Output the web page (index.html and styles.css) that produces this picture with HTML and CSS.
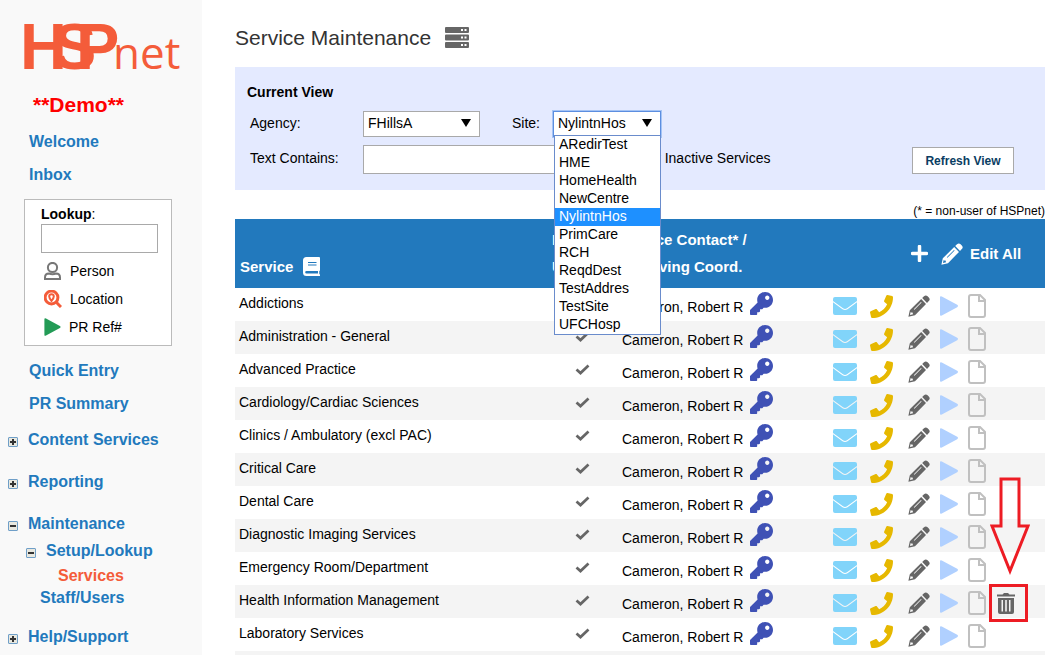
FILE: index.html
```html
<!DOCTYPE html>
<html lang="en">
<head>
    <meta charset="UTF-8">
    <meta name="viewport" content="width=device-width, initial-scale=1.0">
    <title>Service Maintenance</title>
    <link rel="stylesheet" href="styles.css">
</head>
<body>
    <svg class="sprite" aria-hidden="true">
        <symbol id="key" viewBox="0 0 512 512"><path d="M512 176.001C512 273.203 433.202 352 336 352c-11.22 0-22.19-1.062-32.827-3.069l-24.012 27.014A23.999 23.999 0 0 1 261.223 384H224v40c0 13.255-10.745 24-24 24h-40v40c0 13.255-10.745 24-24 24H24c-13.255 0-24-10.745-24-24v-78.059c0-6.365 2.529-12.47 7.029-16.971l161.802-161.802C163.108 213.814 160 195.271 160 176 160 78.798 238.797.001 335.999 0 433.488-.001 512 78.511 512 176.001zM336 128c0 26.51 21.49 48 48 48s48-21.49 48-48-21.49-48-48-48-48 21.49-48 48z"/></symbol>
        <symbol id="phone" viewBox="0 0 512 512"><path d="M493.4 24.6l-104-24c-11.3-2.6-22.9 3.3-27.5 13.9l-48 112c-4.2 9.8-1.4 21.3 6.9 28l60.6 49.6c-36 76.7-98.9 140.5-177.2 177.2l-49.6-60.6c-6.8-8.3-18.2-11.1-28-6.9l-112 48C3.9 366.5-2 378.1.6 389.4l24 104C27.1 504.2 36.7 512 48 512c256.1 0 464-207.5 464-464 0-11.2-7.7-20.9-18.6-23.4z"/></symbol>
        <symbol id="check" viewBox="0 0 15 11"><path d="M1.5 5.5l4 3.6L13.5 1.600" fill="none" stroke="currentColor" stroke-width="2.700"/></symbol>
        <symbol id="mail" viewBox="0 0 24 18"><path d="M2 0h20q2 0 2 2v2L14 11.200q-2 1.400-4 0L0 4V2q0-2 2-2zM0 5.300l9.500 6.900q2.500 1.600 5 0L24 5.300V16q0 2-2 2H2q-2 0-2-2z"/></symbol>
        <symbol id="pencil" viewBox="0 0 22 22"><path fill-rule="evenodd" d="M16 1.300q1.800-1.800 3.600 0l1.200 1.200q1.800 1.800 0 3.600l-1.800 1.800-4.800-4.800zM13.200 4.100l4.800 4.800L7 20.200l-6.600 1.600L1.800 15.300zM2.600 17l-.6 3 3-.7-.4-1.700-1.600-.2zM13 7l-7.200 7.200.6.600 7.200-7.200z"/></symbol>
        <symbol id="play" viewBox="0 0 18 20"><path d="M0 1.500Q0-.5 1.800.5l15.400 8.300q1.600 1.200 0 2.400L1.800 19.500Q0 20.500 0 18.500z"/></symbol>
        <symbol id="file" viewBox="0 0 18 24"><path d="M3 1h9l5 5v15q0 2-2 2H3q-2 0-2-2V3q0-2 2-2zM11 1.500V7h5.500" fill="none" stroke="currentColor" stroke-width="2"/></symbol>
        <symbol id="trash" viewBox="0 0 18 21"><path fill-rule="evenodd" d="M0 1.500h5.500L7 0h4l1.500 1.500H18v2H0zM1 5h16v14q0 2-2 2H3q-2 0-2-2zM4.500 7v11.500h1.500V7zM8.200 7v11.500h1.600V7zM12 7v11.500h1.500V7z"/></symbol>
        <symbol id="plus" viewBox="0 0 17 17"><path d="M8.500 1.500v14M1.500 8.500h14" fill="none" stroke="currentColor" stroke-width="3.500" stroke-linecap="round"/></symbol>
        <symbol id="book" viewBox="0 0 17 19"><path fill-rule="evenodd" d="M3.500 0H16q1 0 1 1v12.500l-.7.500v3l.7.500V19H3.500Q0 19 0 15.500v-12Q0 0 3.500 0zM5 5v1h8.500V5zM5 7.500v1h8.500v-1zM3.500 14q-1.300 0-1.300 1.200t1.300 1.300H15V14z"/></symbol>
    </svg>

    <aside class="sidebar">
        <a class="logo" href="#">
            <svg width="170" height="66" viewBox="0 0 170 66" role="img" aria-label="HSPnet">
                <text class="logo-bold" x="-3 30 53" y="50">HSP</text>
                <text class="logo-light" x="90" y="50">net</text>
            </svg>
        </a>
        <p class="demo">**Demo**</p>
        <nav class="links">
            <a href="#">Welcome</a>
            <a href="#">Inbox</a>
        </nav>

        <form class="lookup">
            <label for="lookup"><b>Lookup</b>:</label>
            <input type="text" id="lookup">
            <a class="lookup-row" href="#">
                <svg class="person" width="18" height="18" viewBox="0 0 18 18"><circle cx="8.500" cy="5.500" r="4.600"/><path d="M1 17v-1.500q0-4 4-4 3.500 1.500 7 0 4 0 4 4V17z"/></svg>
                Person
            </a>
            <a class="lookup-row" href="#">
                <svg class="location" width="18" height="18" viewBox="0 0 18 18"><circle cx="7.500" cy="7.500" r="6.400"/><path d="M12 12l5 5"/><path class="pin" d="M7.500 11C5.700 8.700 5.200 7.700 5.200 6.500a2.300 2.300 0 0 1 4.600 0c0 1.200-.5 2.200-2.300 4.500z"/></svg>
                Location
            </a>
            <a class="lookup-row" href="#">
                <svg class="ref" width="17" height="18"><use href="#play"/></svg>
                PR Ref#
            </a>
        </form>

        <nav class="links">
            <a href="#">Quick Entry</a>
            <a href="#">PR Summary</a>
        </nav>

        <ul class="tree">
            <li><button class="toggle plus" aria-label="Expand"></button><a href="#">Content Services</a></li>
            <li><button class="toggle plus" aria-label="Expand"></button><a href="#">Reporting</a></li>
            <li>
                <button class="toggle" aria-label="Collapse"></button><a href="#">Maintenance</a>
                <ul class="subtree">
                    <li><button class="toggle" aria-label="Collapse"></button><a href="#">Setup/Lookup</a></li>
                    <li class="leaf"><a class="current" href="#">Services</a></li>
                    <li class="staff"><a href="#">Staff/Users</a></li>
                </ul>
            </li>
            <li><button class="toggle plus" aria-label="Expand"></button><a href="#">Help/Support</a></li>
        </ul>
    </aside>

    <main class="content">
        <h1>
            Service Maintenance
            <svg class="server" width="24" height="22" viewBox="0 0 24 22">
                <path d="M1 0h22q1 0 1 1v4q0 1-1 1H1Q0 6 0 5V1q0-1 1-1zM1 7.500h22q1 0 1 1v4q0 1-1 1H1q-1 0-1-1v-4q0-1 1-1zM1 15h22q1 0 1 1v4q0 1-1 1H1q-1 0-1-1v-4q0-1 1-1z"/>
                <path class="leds" d="M16 3h2M19.500 3h2M16 10.500h2M19.500 10.500h2M16 18h2M19.500 18h2"/>
            </svg>
        </h1>

        <form class="view">
            <h2>Current View</h2>
            <div class="view-row">
                <label class="first" for="agency">Agency:</label>
                <div class="select agency">
                    <select id="agency"><option>FHillsA</option></select>
                </div>
                <label class="site-label" for="site">Site:</label>
                <div class="select site">
                    <select id="site"><option>NylintnHos</option></select>
                    <ul class="options" role="listbox">
                        <li role="option">ARedirTest</li>
                        <li role="option">HME</li>
                        <li role="option">HomeHealth</li>
                        <li role="option">NewCentre</li>
                        <li role="option" class="selected" aria-selected="true">NylintnHos</li>
                        <li role="option">PrimCare</li>
                        <li role="option">RCH</li>
                        <li role="option">ReqdDest</li>
                        <li role="option">TestAddres</li>
                        <li role="option">TestSite</li>
                        <li role="option">UFCHosp</li>
                    </ul>
                </div>
            </div>
            <div class="view-row">
                <label class="first" for="contains">Text Contains:</label>
                <input type="text" id="contains">
                <input type="checkbox" id="inactive">
                <label for="inactive">Only Inactive Services</label>
                <button type="button" class="refresh">Refresh View</button>
            </div>
        </form>

        <p class="note">(* = non-user of HSPnet)</p>

        <table class="services">
            <colgroup>
                <col>
                <col class="col-use">
                <col class="col-contact">
                <col class="col-actions">
            </colgroup>
            <thead>
                <tr>
                    <th><div class="head-service">Service <svg width="17" height="19"><use href="#book"/></svg></div></th>
                    <th>In<br>Use</th>
                    <th class="head-contact">Service Contact* /<br>Receiving Coord.</th>
                    <th>
                        <div class="head-actions">
                            <a href="#" aria-label="Add"><svg width="17" height="17"><use href="#plus"/></svg></a>
                            <a href="#"><svg width="22" height="22"><use href="#pencil"/></svg>Edit All</a>
                        </div>
                    </th>
                </tr>
            </thead>
            <tbody id="rows"></tbody>
        </table>
    </main>

    <script>
        const services = [
            "Addictions",
            "Administration - General",
            "Advanced Practice",
            "Cardiology/Cardiac Sciences",
            "Clinics / Ambulatory (excl PAC)",
            "Critical Care",
            "Dental Care",
            "Diagnostic Imaging Services",
            "Emergency Room/Department",
            "Health Information Management",
            "Laboratory Services"
        ];

        const icon = (name, w, h) => `<svg class="${name}" width="${w}" height="${h}"><use href="#${name}"/></svg>`;
        const link = (label, name, w, h) => `<a href="#" aria-label="${label}">${icon(name, w, h)}</a>`;

        // The delete link and its callout only show on one service
        const remove = `<a href="#" class="delete" aria-label="Delete">${icon("trash", 18, 21)}
            <svg class="arrow" width="40" height="98" viewBox="0 0 40 98"><path d="M11 2h18v47h9L20 94 2 49h9z"/></svg></a>`;

        document.getElementById("rows").innerHTML = services.map(service => `
            <tr>
                <td>${service}</td>
                <td class="use">${icon("check", 15, 11)}</td>
                <td><div class="contact">Cameron, Robert R ${link("Access", "key", 23, 23)}</div></td>
                <td><div class="actions">
                    ${link("Email", "mail", 24, 18)}
                    ${link("Phone", "phone", 23, 23)}
                    ${link("Edit", "pencil", 22, 22)}
                    ${link("Run", "play", 18, 20)}
                    ${link("Document", "file", 18, 24)}
                    ${service.startsWith("Health") ? remove : ""}
                </div></td>
            </tr>`).join("") + `<tr><td></td><td></td><td></td><td></td></tr>`;
    </script>
</body>
</html>
```
FILE: styles.css
```css
* {
    box-sizing: border-box;
}

body {
    margin: 0;
    height: 100vh;
    overflow: hidden;
    display: flex;
    font-family: "Liberation Sans", Arial, sans-serif;
    font-size: 14px;
    color: #000;
    background-color: #fff;
}

a {
    color: inherit;
    text-decoration: none;
}

h1, h2, p, ul {
    margin: 0;
    padding: 0;
    list-style: none;
}

svg {
    display: block;
    flex: none;
    fill: currentColor;
}

input, select, button {
    font: inherit;
    color: inherit;
    background-color: #fff;
    border: 1px solid #a9a9a9;
    border-radius: 0;
}

.sprite {
    display: none;
}

/* Sidebar */
.sidebar {
    flex: none;
    width: 202px;
    background-color: #f9f9f9;
    color: #2279bd;
    font-size: 16px;
    font-weight: bold;
}

.logo {
    display: block;
    padding: 19px 0 0 23px;
    color: #f45c3a;
}

.logo svg {
    overflow: visible;
}

.logo-bold {
    font-size: 65px;
    font-weight: bold;
}

.logo-light {
    font-family: "Open Sans", sans-serif;
    font-size: 44px;
    font-weight: normal;
}

.demo {
    padding-left: 33px;
    margin-top: 8px;
    line-height: 24px;
    font-size: 21px;
    color: #f00;
}

.links {
    padding: 8px 0 0 29px;
}

.links a {
    display: block;
    line-height: 33px;
}

.lookup {
    margin: 8px 30px 0 24px;
    padding: 4px 13px 4px 16px;
    border: 1px solid #bbb;
    background-color: #fff;
    color: #000;
    font-size: 14px;
    font-weight: normal;
}

.lookup label {
    display: block;
    line-height: 20px;
}

.lookup input {
    display: block;
    width: 100%;
    height: 29px;
    margin-bottom: 4px;
}

.lookup-row {
    display: flex;
    align-items: center;
    gap: 8px;
    padding-left: 3px;
    height: 28px;
}

.person {
    fill: none;
    stroke: #777;
    stroke-width: 2;
}

.location {
    fill: none;
    stroke: #f45c3a;
    stroke-width: 3;
}

.location .pin {
    stroke-width: 2;
}

.ref {
    color: #239b56;
}

.tree {
    padding: 9px 0 0 8px;
    line-height: 22px;
}

.tree > li {
    margin-bottom: 20px;
}

.toggle {
    width: 10px;
    height: 10px;
    margin-right: 10px;
    padding: 0;
    vertical-align: -1px;
    border: 1px solid #6f9fc8;
    border-radius: 1px;
    background: linear-gradient(#333, #333) center / 6px 2px no-repeat, #e8e8e0;
}

.toggle.plus {
    background: linear-gradient(#333, #333) center / 6px 2px no-repeat,
        linear-gradient(#333, #333) center / 2px 6px no-repeat, #e8e8e0;
}

.subtree {
    margin-bottom: -3px;
    padding: 5px 0 0 18px;
}

.leaf {
    margin-top: 3px;
    padding-left: 32px;
}

.staff {
    padding-left: 14px;
}

.current {
    color: #f45c3a;
}

/* Main area */
.content {
    flex: 1;
    padding: 24px 12px 0 33px;
}

h1 {
    display: flex;
    align-items: center;
    gap: 14px;
    height: 27px;
    font-size: 21px;
    font-weight: normal;
    color: #333;
}

.server {
    color: #666;
}

.leds {
    stroke: #fff;
    stroke-width: 2;
}

.view {
    margin-top: 16px;
    padding: 16px 31px 16px 12px;
    background-color: #e4eaff;
}

.view h2 {
    margin-bottom: 10px;
    line-height: 18px;
    font-size: 14px;
}

.view-row {
    display: flex;
    align-items: center;
    padding-left: 3px;
}

.view-row + .view-row {
    margin-top: 8px;
}

.view-row label {
    padding-bottom: 3px;
}

.first {
    width: 113px;
}

.site-label {
    width: 41px;
    margin-left: 32px;
}

.select {
    position: relative;
    height: 26px;
}

.select::after {
    content: "";
    position: absolute;
    top: 8px;
    right: 9px;
    border: 5px solid transparent;
    border-top: 8px solid #000;
    border-bottom: 0;
    pointer-events: none;
}

.select select {
    width: 100%;
    height: 100%;
    padding: 0 4px 2px;
    appearance: none;
}

.agency {
    width: 117px;
}

.site {
    width: 108px;
}

.site select {
    border: 1px solid #5c8ee0;
    outline: 1px solid #a5c4f5;
}

.options {
    position: absolute;
    z-index: 1;
    top: 24px;
    left: 1px;
    right: 0;
    border: 1px solid #6a8ccc;
    background-color: #fff;
}

.options li {
    height: 18px;
    padding-left: 4px;
    line-height: 16px;
}

.options .selected {
    background-color: #1e90ff;
    color: #fff;
}

#contains {
    width: 238px;
    height: 29px;
}

#inactive {
    margin: 0 14px 0 4px;
}

.refresh {
    align-self: flex-end;
    margin-left: auto;
    width: 102px;
    height: 27px;
    padding: 0;
    font-size: 12px;
    font-weight: bold;
    color: #0a3d62;
}

.note {
    margin-top: 14px;
    line-height: 15px;
    text-align: right;
    font-size: 12px;
}

/* Services table */
.services {
    width: 100%;
    table-layout: fixed;
    border-collapse: collapse;
}

.col-use {
    width: 60px;
}

.col-contact {
    width: 211px;
}

.col-actions {
    width: 222px;
}

th {
    height: 69px;
    padding: 0 0 2px;
    text-align: left;
    line-height: 27px;
    font-size: 15px;
    color: #fff;
    background-color: #2279bd;
}

.head-service {
    display: flex;
    align-items: center;
    gap: 10px;
    padding: 28px 0 0 5px;
}

.head-contact {
    padding-left: 7px;
}

.head-actions, .head-actions a {
    display: flex;
    align-items: center;
}

.head-actions {
    gap: 13px;
    padding: 2px 0 0 88px;
}

.head-actions a {
    gap: 7px;
}

td {
    height: 33px;
    padding: 0 0 3px 4px;
}

tbody tr:nth-child(even) {
    background-color: #f4f4f4;
}

.use {
    padding-left: 23px;
}

.contact {
    display: flex;
    align-items: flex-end;
    gap: 7px;
    padding-left: 6px;
}

.actions {
    display: grid;
    grid-template-columns: 37px 38px 32px 28px 29px 18px;
    align-items: center;
    height: 24px;
    margin-top: 6px;
    padding-left: 6px;
}

.check, .pencil, .trash {
    color: #666;
}

.head-actions svg {
    color: #fff;
}

.key {
    color: #3f51b5;
}

.mail {
    color: #81d4fa;
}

.phone {
    color: #e6b800;
}

.play {
    color: #b0d0ff;
}

.file {
    color: #c0c0c0;
}

/* Red callout over the delete icon */
.delete {
    position: relative;
}

.delete::before {
    content: "";
    position: absolute;
    inset: -9px -13px -8px -8px;
    border: 3px solid #ed1c24;
}

.arrow {
    position: absolute;
    bottom: 39px;
    left: -7px;
    fill: none;
    stroke: #ed1c24;
    stroke-width: 3;
}
```
